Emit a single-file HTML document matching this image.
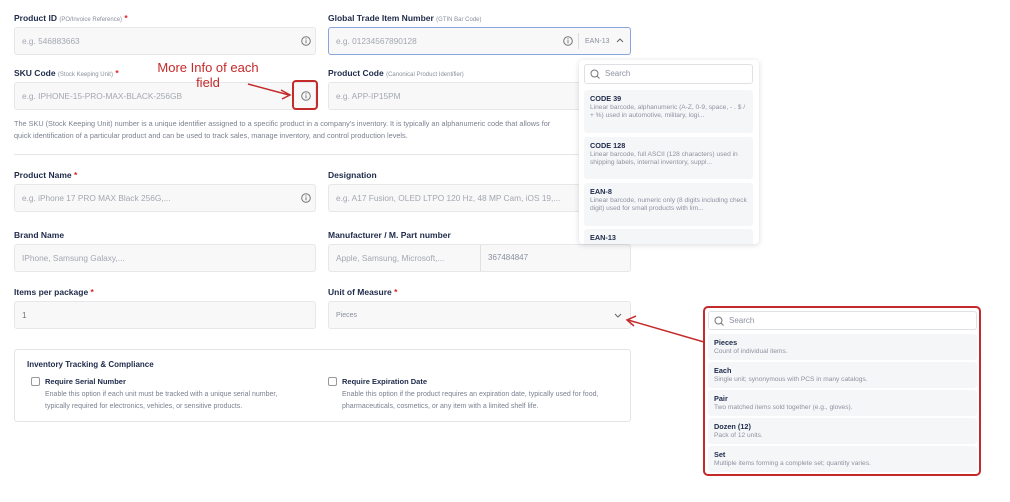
<!DOCTYPE html>
<html><head><style>
*{box-sizing:border-box;margin:0;padding:0}
body{width:1010px;height:502px;background:#fff;font-family:"Liberation Sans",sans-serif;position:relative;overflow:hidden;color:#1e2a4a}
.a{position:absolute}
.lbl{font-size:8.5px;font-weight:bold;color:#1e2a4a;white-space:nowrap}
.lbl small{font-size:6px;font-weight:normal;color:#8a8f9c}
.lbl b{color:#d22;font-weight:bold}
.in{position:absolute;height:28px;background:#f8f8f9;border:1px solid #e6e7ea;border-radius:3px;font-size:8.3px;color:#a3a7b0;padding-left:7px;line-height:26px;white-space:nowrap;overflow:hidden}
.info{position:absolute;width:10px;height:10px}
.dd{position:absolute;background:#fff;border-radius:4px}
.it{position:absolute;background:#f5f6f8;border-radius:3px;padding:4px 6px}
.it h4{font-size:7.3px;color:#1e2a4a;margin-bottom:1px}
.it p{font-size:6.6px;color:#8d92a0;line-height:8px}
.srch{position:absolute;border:1px solid #dfe1e5;border-radius:3px;font-size:8px;color:#8d92a0;padding-left:20px;line-height:18px}
.cb{position:absolute;width:9px;height:9px;border:1px solid #999;border-radius:2px}
.d{font-size:7.3px;color:#7c8190;line-height:12px}
</style></head><body>
<svg width="0" height="0" style="position:absolute"><defs><g id="i"><circle cx="5" cy="5" r="4.3" stroke="#777" stroke-width="1" fill="none"/><path d="M5 4.3V7.3" stroke="#777" stroke-width="1"/><circle cx="5" cy="2.9" r=".6" fill="#777"/></g></defs></svg>
<div class="a lbl" style="left:14px;top:13px">Product ID <small>(PO/Invoice Reference)</small> <b>*</b></div>
<div class="in" style="left:14px;top:27px;width:302px">e.g. 546883663</div>
<svg class="info" style="left:301px;top:36px"><use href="#i"/></svg>

<div class="a lbl" style="left:328px;top:13px">Global Trade Item Number <small>(GTIN Bar Code)</small></div>
<div class="in" style="left:328px;top:27px;width:303px;border:1px solid #8aa4dd">e.g. 01234567890128</div>
<svg class="info" style="left:563px;top:36px"><use href="#i"/></svg>
<div class="a" style="left:578px;top:33px;width:1px;height:16px;background:#ddd"></div>
<div class="a" style="left:585px;top:38px;font-size:7px;color:#8a8f9c">EAN-13</div>
<svg class="a" style="left:616px;top:37px" width="8" height="6"><path d="M1 5L4 2L7 5" stroke="#666" fill="none"/></svg>

<div class="a lbl" style="left:14px;top:68px">SKU Code <small>(Stock Keeping Unit)</small> <b>*</b></div>
<div class="in" style="left:14px;top:82px;width:302px">e.g. IPHONE-15-PRO-MAX-BLACK-256GB</div>
<svg class="info" style="left:301px;top:91px"><use href="#i"/></svg>
<div class="a" style="left:292px;top:80px;width:26px;height:30px;border:2px solid #c42a2a;border-radius:4px"></div>
<div class="a" style="left:153px;top:60px;font-size:13px;color:#c42a2a;text-align:center;width:110px;line-height:15px">More Info of each field</div>
<svg class="a" style="left:245px;top:78px" width="50" height="25"><path d="M3 6 L44 17" stroke="#c42a2a" stroke-width="1.5"/><path d="M36 12 L45 17 L37 21" stroke="#c42a2a" stroke-width="1.5" fill="none"/></svg>

<div class="a lbl" style="left:328px;top:68px">Product Code <small>(Canonical Product Identifier)</small></div>
<div class="in" style="left:328px;top:82px;width:303px">e.g. APP-IP15PM</div>

<div class="a d" style="left:14px;top:118px;width:555px">The SKU (Stock Keeping Unit) number is a unique identifier assigned to a specific product in a company's inventory. It is typically an alphanumeric code that allows for quick identification of a particular product and can be used to track sales, manage inventory, and control production levels.</div>
<div class="a" style="left:14px;top:154px;width:617px;height:1px;background:#e6e7ea"></div>

<div class="a lbl" style="left:14px;top:170px">Product Name <b>*</b></div>
<div class="in" style="left:14px;top:184px;width:302px">e.g. iPhone 17 PRO MAX Black 256G,...</div>
<svg class="info" style="left:301px;top:193px"><use href="#i"/></svg>
<div class="a lbl" style="left:328px;top:170px">Designation</div>
<div class="in" style="left:328px;top:184px;width:303px">e.g. A17 Fusion, OLED LTPO 120 Hz, 48 MP Cam, iOS 19,...</div>

<div class="a lbl" style="left:14px;top:230px">Brand Name</div>
<div class="in" style="left:14px;top:244px;width:302px">IPhone, Samsung Galaxy,...</div>
<div class="a lbl" style="left:328px;top:230px">Manufacturer / M. Part number</div>
<div class="in" style="left:328px;top:244px;width:303px">Apple, Samsung, Microsoft,...</div>
<div class="a" style="left:480px;top:245px;width:1px;height:26px;background:#e0e0e0"></div>
<div class="a" style="left:488px;top:253px;font-size:8px;color:#8a8f9c">367484847</div>

<div class="a lbl" style="left:14px;top:287px">Items per package <b>*</b></div>
<div class="in" style="left:14px;top:301px;width:302px;color:#777">1</div>
<div class="a lbl" style="left:328px;top:287px">Unit of Measure <b>*</b></div>
<div class="in" style="left:328px;top:301px;width:303px;font-size:7px;color:#8a8f9c;line-height:28px">Pieces</div>
<svg class="a" style="left:614px;top:313px" width="8" height="6"><path d="M1 1L4 4L7 1" stroke="#666" fill="none"/></svg>

<div class="a" style="left:14px;top:349px;width:617px;height:73px;border:1px solid #e3e4e8;border-radius:3px"></div>
<div class="a lbl" style="left:27px;top:360px;font-size:8px">Inventory Tracking &amp; Compliance</div>
<div class="cb" style="left:31px;top:377px"></div>
<div class="a lbl" style="left:45px;top:377px;font-size:7.5px">Require Serial Number</div>
<div class="a d" style="left:45px;top:389px;width:245px;font-size:7px">Enable this option if each unit must be tracked with a unique serial number, typically required for electronics, vehicles, or sensitive products.</div>
<div class="cb" style="left:328px;top:377px"></div>
<div class="a lbl" style="left:342px;top:377px;font-size:7.5px">Require Expiration Date</div>
<div class="a d" style="left:342px;top:389px;width:270px;font-size:7px">Enable this option if the product requires an expiration date, typically used for food, pharmaceuticals, cosmetics, or any item with a limited shelf life.</div>

<!-- GTIN dropdown -->
<div class="dd" style="left:579px;top:60px;width:180px;height:184px;box-shadow:0 1px 6px rgba(0,0,0,.15);overflow:hidden">
 <div class="srch" style="left:5px;top:4px;width:169px;height:20px">Search</div>
 <svg class="a" style="left:11px;top:9px" width="10" height="10"><circle cx="4.5" cy="4.5" r="3.5" stroke="#777" fill="none"/><path d="M7 7L9.5 9.5" stroke="#777"/></svg>
 <div class="it" style="left:5px;top:30px;width:169px;height:43px"><h4>CODE 39</h4><p>Linear barcode, alphanumeric (A-Z, 0-9, space, - . $ / + %) used in automotive, military, logi...</p></div>
 <div class="it" style="left:5px;top:77px;width:169px;height:42px"><h4>CODE 128</h4><p>Linear barcode, full ASCII (128 characters) used in shipping labels, internal inventory, suppl...</p></div>
 <div class="it" style="left:5px;top:123px;width:169px;height:43px"><h4>EAN-8</h4><p>Linear barcode, numeric only (8 digits including check digit) used for small products with lim...</p></div>
 <div class="it" style="left:5px;top:169px;width:169px;height:30px"><h4>EAN-13</h4></div>
</div>

<!-- Unit dropdown -->
<div class="dd" style="left:703px;top:306px;width:278px;height:170px;border:2px solid #c42a2a;border-radius:5px">
 <div class="srch" style="left:3px;top:3px;width:269px;height:19px">Search</div>
 <svg class="a" style="left:9px;top:8px" width="10" height="10"><circle cx="4.5" cy="4.5" r="3.5" stroke="#777" fill="none"/><path d="M7 7L9.5 9.5" stroke="#777"/></svg>
 <div class="it" style="left:3px;top:26px;width:269px;height:26px"><h4>Pieces</h4><p>Count of individual items.</p></div>
 <div class="it" style="left:3px;top:54px;width:269px;height:26px"><h4>Each</h4><p>Single unit; synonymous with PCS in many catalogs.</p></div>
 <div class="it" style="left:3px;top:82px;width:269px;height:26px"><h4>Pair</h4><p>Two matched items sold together (e.g., gloves).</p></div>
 <div class="it" style="left:3px;top:110px;width:269px;height:26px"><h4>Dozen (12)</h4><p>Pack of 12 units.</p></div>
 <div class="it" style="left:3px;top:138px;width:269px;height:26px"><h4>Set</h4><p>Multiple items forming a complete set; quantity varies.</p></div>
</div>
<svg class="a" style="left:620px;top:310px" width="86" height="35"><path d="M84 32 L8 10" stroke="#c42a2a" stroke-width="1.5"/><path d="M16 6 L7 10 L14 16" stroke="#c42a2a" stroke-width="1.5" fill="none"/></svg>
</body></html>
